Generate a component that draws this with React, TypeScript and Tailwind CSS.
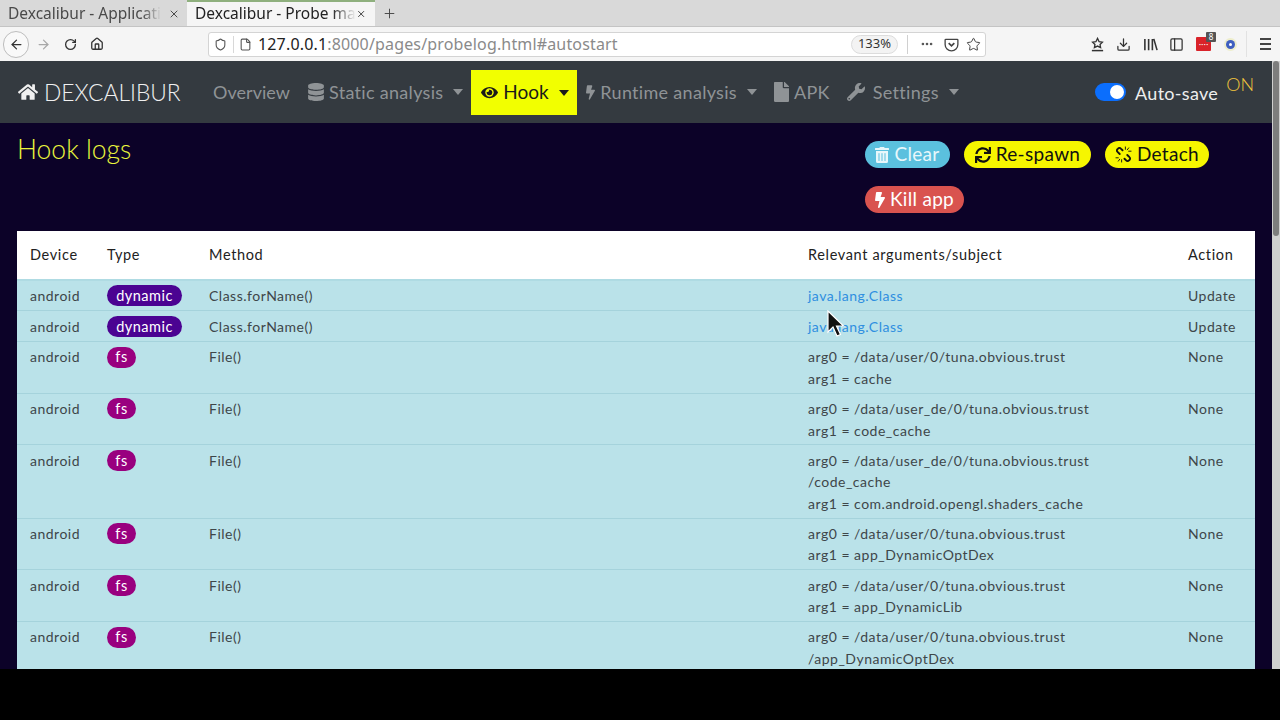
import React from "react";
import { FaHome, FaDatabase, FaEye, FaBolt, FaFile, FaWrench, FaTrashAlt, FaSync } from "react-icons/fa";
import { ArrowLeft, ArrowRight, RotateCw, Home, Shield, File, Star, Download, PanelLeft, X, Plus, Ellipsis } from "lucide-react";

const page = "font-['Lato','Liberation_Sans',sans-serif]";
const chrome = "font-['Noto_Sans','Open_Sans',sans-serif]";

function Caret() {
  return <span className="ml-[5px] inline-block h-0 w-0 border-x-[5.5px] border-t-[6px] border-x-transparent border-t-current" />;
}

function NavItem({ icon, label, caret, cls, track }: { icon?: React.ReactNode; label: string; caret?: boolean; cls: string; track?: string }) {
  return (
    <div className={`flex items-center gap-[5px] text-[18px] text-[#8f9396] ${track ?? "tracking-[0.3px]"} ${cls}`}>
      {icon}
      <span>{label}</span>
      {caret && <Caret />}
    </div>
  );
}

function Pill({ cls, icon, label }: { cls: string; icon: React.ReactNode; label: string }) {
  return (
    <div className={`flex h-[27px] items-center justify-center gap-[5px] rounded-full text-[19px] tracking-[0.3px] ${cls}`}>
      {icon}
      <span>{label}</span>
    </div>
  );
}

function Detach() {
  return (
    <svg viewBox="0 0 18 18" className="h-[17px] w-[17px]" fill="none" stroke="currentColor" strokeLinecap="round">
      <path d="M8 4.5L6.2 2.7a2 2 0 0 0-3 0l-.5.5a2 2 0 0 0 0 3l2.3 2.3" strokeWidth="2" />
      <path d="M10 13.5l1.8 1.8a2 2 0 0 0 3 0l.5-.5a2 2 0 0 0 0-3L13 9.5" strokeWidth="2" />
      <path d="M11 1v2.5M14.5 2L13 4M17 5.5h-2.5M1 12.5h2.5M3.5 16L5 14M7 17v-2.5" strokeWidth="1" />
    </svg>
  );
}

type Row = { type: "dynamic" | "fs"; method: string; lines: string[]; link?: boolean; action: string; h: string; pt: string };

const rows: Row[] = [
  { type: "dynamic", method: "Class.forName()", lines: ["java.lang.Class"], link: true, action: "Update", h: "h-[30px]", pt: "pt-[4px]" },
  { type: "dynamic", method: "Class.forName()", lines: ["java.lang.Class"], link: true, action: "Update", h: "h-[31px]", pt: "pt-[5px]" },
  { type: "fs", method: "File()", lines: ["arg0 = /data/user/0/tuna.obvious.trust", "arg1 = cache"], action: "None", h: "h-[51.7px]", pt: "pt-[4.4px]" },
  { type: "fs", method: "File()", lines: ["arg0 = /data/user_de/0/tuna.obvious.trust", "arg1 = code_cache"], action: "None", h: "h-[51.7px]", pt: "pt-[4.4px]" },
  { type: "fs", method: "File()", lines: ["arg0 = /data/user_de/0/tuna.obvious.trust", "/code_cache", "arg1 = com.android.opengl.shaders_cache"], action: "None", h: "h-[73.2px]", pt: "pt-[4.4px]" },
  { type: "fs", method: "File()", lines: ["arg0 = /data/user/0/tuna.obvious.trust", "arg1 = app_DynamicOptDex"], action: "None", h: "h-[51.7px]", pt: "pt-[4.4px]" },
  { type: "fs", method: "File()", lines: ["arg0 = /data/user/0/tuna.obvious.trust", "arg1 = app_DynamicLib"], action: "None", h: "h-[51.7px]", pt: "pt-[4.4px]" },
  { type: "fs", method: "File()", lines: ["arg0 = /data/user/0/tuna.obvious.trust", "/app_DynamicOptDex"], action: "None", h: "h-[51.7px]", pt: "pt-[4.4px]" },
];

const col1 = "w-[77px] shrink-0 pl-[13px]";
const col2 = "w-[102px] shrink-0 pl-[13px]";
const col3 = "w-[599px] shrink-0 pl-[13px]";
const col4 = "w-[380px] shrink-0 pl-[13px]";
const col5 = "w-[80px] shrink-0 pl-[13px]";

function LogRow({ r }: { r: Row }) {
  return (
    <div className={`flex ${r.h} ${r.pt} shrink-0 border-b border-[#a5d3dc] text-[14px] leading-[21.5px] tracking-[0.5px] text-[#3e4649]`}>
      <div className={col1}>android</div>
      <div className={col2}>
        <span className={`inline-flex h-[21px] items-center justify-center rounded-full text-[14.5px] text-white ${r.type === "fs" ? "w-[29px] bg-[#99007f]" : "w-[75px] bg-[#4b0392]"}`}>
          {r.type}
        </span>
      </div>
      <div className={col3}>{r.method}</div>
      <div className={col4}>
        {r.lines.map((l, i) => (
          <div key={i} className={r.link ? "text-[#2f8fe0]" : ""}>{l}</div>
        ))}
      </div>
      <div className={col5}>{r.action}</div>
    </div>
  );
}

export default function App() {
  return (
    <div className="relative h-[720px] w-[1280px] overflow-hidden bg-black">
      <div className="flex h-[669px] flex-col overflow-hidden">
        {/* Tab strip */}
        <div className={`${chrome} flex h-[27px] shrink-0 items-stretch border-b border-[#c4c4c4] bg-[#d9d9d9] text-[15.5px]`}>
          <div className="flex w-[187px] items-center justify-between pl-2 pr-[7px] pt-px text-[#4a4a4a]">
            <span className="whitespace-nowrap [mask-image:linear-gradient(to_right,black_88%,transparent)]">Dexcalibur - Applicati</span>
            <X size={12} strokeWidth={2} />
          </div>
          <div className="flex w-[188px] items-center justify-between border-t-2 border-t-[#8fb07e] bg-[#f5f5f5] pl-2 pr-[9px] text-[#222]">
            <span className="whitespace-nowrap [mask-image:linear-gradient(to_right,black_85%,transparent)]">Dexcalibur - Probe ma</span>
            <X size={12} strokeWidth={2} />
          </div>
          <div className="flex w-[28px] items-center justify-center text-[#444]">
            <Plus size={15} strokeWidth={1.5} />
          </div>
        </div>
        {/* Toolbar */}
        <div className={`${chrome} flex h-[34px] shrink-0 items-center bg-[#f5f5f5] text-[#333]`}>
          <div className="ml-[3px] flex h-[27px] w-[26px] items-center justify-center rounded-full border border-[#bdbdbd] bg-[#f9f9f9]">
            <ArrowLeft size={15} />
          </div>
          <ArrowRight size={15} className="ml-[7px] text-[#a8a8a8]" />
          <RotateCw size={13} strokeWidth={2.4} className="ml-[13px]" />
          <Home size={14} strokeWidth={2.2} className="ml-[13px]" />
          <div className="ml-[104px] flex h-[25px] w-[778px] items-center rounded-[3px] border border-[#d4d4d4] bg-white">
            <Shield size={13} className="ml-[5px] text-[#555]" />
            <div className="ml-[6px] h-[17px] w-px bg-[#d8d8d8]" />
            <File size={13} className="ml-[5px] text-[#555]" />
            <div className="ml-[6px] text-[16px] tracking-[0.16px]">
              <span className="text-[#222]">127.0.0.1</span>
              <span className="text-[#8a8a8a]">:8000/pages/probelog.html#autostart</span>
            </div>
            <div className="ml-auto flex items-center">
              <div className="flex h-[19px] w-[47px] items-center justify-center rounded-full border border-[#dcdcdc] bg-[#f3f3f3] text-[13px] text-[#333]">133%</div>
              <div className="ml-[9px] h-[19px] w-px bg-[#d0d0d0]" />
              <Ellipsis size={14} strokeWidth={2.5} className="ml-[12px] text-[#555]" />
              <svg viewBox="0 0 16 16" className="ml-[10px] h-[15px] w-[15px] text-[#444]" fill="none" stroke="currentColor" strokeWidth="1.4">
                <path d="M2 2.5h12a.8.8 0 0 1 .8.8V8a6.8 6.8 0 0 1-13.6 0V3.3a.8.8 0 0 1 .8-.8z" />
                <path d="M5 6.5l3 3 3-3" strokeWidth="1.8" />
              </svg>
              <Star size={15} strokeWidth={1.6} className="ml-[7px] mr-[4px] text-[#444]" />
            </div>
          </div>
          <svg viewBox="0 0 16 16" className="ml-[104px] h-[15px] w-[15px] text-[#333]" fill="none" stroke="currentColor" strokeWidth="1.4">
            <path d="M8 1.5l1.7 3.5 3.5.5-2.5 2.4.6 3.4L8 9.7l-3.3 1.6.6-3.4L2.8 5.5l3.5-.5z" />
            <path d="M2 14.5h12" strokeWidth="1.6" />
          </svg>
          <Download size={15} className="ml-[11px]" />
          <svg viewBox="0 0 16 16" className="ml-[12px] h-[15px] w-[15px]" fill="none" stroke="currentColor" strokeWidth="1.7">
            <path d="M2 2v12M6 2v12M10 2v12M11.5 2l3.5 12" />
          </svg>
          <PanelLeft size={15} className="ml-[11px]" />
          <div className="relative ml-[12px] flex h-[14px] w-[15px] items-center justify-center rounded-[1px] bg-[#d9232a] text-[9px] leading-none text-white">
            ····
            <span className="absolute -right-[5px] -top-[5px] flex h-[10px] w-[10px] items-center justify-center rounded-[1px] bg-[#555] text-[8px] text-white">8</span>
          </div>
          <div className="ml-[15px] flex h-[9px] w-[9px] items-center justify-center rounded-full bg-[#3f5fc0] ring-2 ring-[#eeeecc]">
            <span className="h-[3px] w-[3px] rounded-full bg-white" />
          </div>
          <div className="ml-[11px] h-[26px] w-px bg-[#e2e2e2]" />
          <div className="ml-[13px] flex h-[12px] w-[11px] flex-col justify-between">
            <span className="h-[2px] bg-[#444]" />
            <span className="h-[2px] bg-[#444]" />
            <span className="h-[2px] bg-[#444]" />
          </div>
        </div>
        {/* Page */}
        <div className={`${page} flex min-h-0 flex-1`}>
          <div className="flex min-w-0 flex-1 flex-col bg-[#0c0228]">
            <nav className="flex h-[62px] shrink-0 items-center bg-[#343a40] pl-[18px]">
              <div className="flex w-[195px] items-center gap-[6px] text-[22.8px] font-light text-[#f0f0f0]">
                <FaHome className="h-[20px] w-[20px]" />
                <span>DEXCALIBUR</span>
              </div>
              <div className="flex h-full items-center">
                <NavItem cls="ml-0" track="tracking-[0.05px]" label="Overview" />
                <NavItem cls="ml-[18px]" icon={<FaDatabase className="h-[18px] w-[16px]" />} label="Static analysis" caret />
                <div className="mb-[-1px] ml-[8px] flex h-[45px] w-[106px] items-center gap-[5px] bg-[#f2ff00] pl-[10px] text-[19px] text-[#1a1a1a]">
                  <FaEye className="h-[15px] w-[17px]" />
                  <span>Hook</span>
                  <Caret />
                </div>
                <NavItem cls="ml-[9px]" icon={<FaBolt className="h-[15px] w-[9px]" />} label="Runtime analysis" caret />
                <NavItem cls="ml-[17px]" icon={<FaFile className="h-[20px] w-[15px]" />} label="APK" />
                <NavItem cls="ml-[17px]" icon={<FaWrench className="mr-[3px] h-[18px] w-[18px]" />} label="Settings" caret />
              </div>
              <div className="ml-auto flex items-center pr-[18px]">
                <div className="flex h-[18px] w-[31px] items-center justify-end rounded-full bg-[#0b6efd] pr-[2px]">
                  <span className="h-[14px] w-[14px] rounded-full bg-white" />
                </div>
                <span className="ml-[9px] mt-[2px] text-[18px] tracking-[0.3px] text-[#eeeeee]">Auto-save</span>
                <span className="ml-[8px] -mt-[16px] text-[18px] font-light text-[#f2c53d]">ON</span>
              </div>
            </nav>
            <div className="flex min-h-0 flex-1 flex-col overflow-hidden">
              <div className="flex h-[108px] shrink-0 pl-[17px]">
                <h1 className="mt-[11px] w-[848px] shrink-0 text-[26.5px] font-light leading-[30px] text-[#eaf53c]">Hook logs</h1>
                <div className="mt-[18px] flex w-[380px] flex-wrap content-start gap-x-[14px] gap-y-[18px]">
                  <Pill cls="w-[85px] bg-[#5bc0de] text-[#e8f7fb]" icon={<FaTrashAlt className="h-[16px] w-[14px]" />} label="Clear" />
                  <Pill cls="w-[127px] bg-[#f6f600] text-[#111]" icon={<FaSync className="h-[16px] w-[16px]" />} label="Re-spawn" />
                  <Pill cls="w-[104px] bg-[#f6f600] text-[#111]" icon={<Detach />} label="Detach" />
                  <Pill cls="w-[99px] bg-[#d9534f] text-white" icon={<FaBolt className="h-[16px] w-[10px]" />} label="Kill app" />
                </div>
              </div>
              <div className="mx-[17px] flex min-h-0 flex-1 flex-col overflow-hidden bg-[#bae2e9]">
                <div className="flex h-[50px] shrink-0 items-center border-b-2 border-[#afdbe3] bg-white text-[14.5px] tracking-[0.65px] text-[#222]">
                  <div className={col1}>Device</div>
                  <div className={col2}>Type</div>
                  <div className={col3}>Method</div>
                  <div className={col4}>Relevant arguments/subject</div>
                  <div className={col5}>Action</div>
                </div>
                {rows.map((r, i) => (
                  <LogRow key={i} r={r} />
                ))}
              </div>
            </div>
          </div>
          {/* Scrollbar */}
          <div className="w-[8px] shrink-0 bg-[#cfcfcf] pl-[1px]">
            <div className="h-[175px] w-[6px] rounded-full bg-[#7d7d7d]" />
          </div>
        </div>
      </div>
      {/* Mouse cursor */}
      <svg viewBox="0 0 18 28" className="absolute left-[827px] top-[310px] h-[28px] w-[18px]">
        <path d="M1 1v21l5-5 4 9 3.5-1.5-4-8.5h7z" fill="#111" stroke="#fff" strokeWidth="1.2" />
      </svg>
    </div>
  );
}
